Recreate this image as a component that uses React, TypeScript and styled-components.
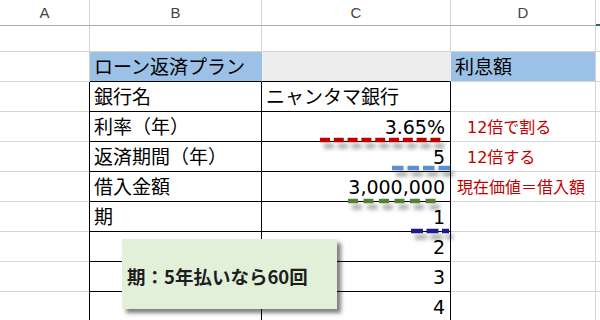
import React from 'react';
import styled, { createGlobalStyle } from 'styled-components';

const GlobalStyle = createGlobalStyle`
  html, body {
    margin: 0;
    padding: 0;
    background: #ffffff;
    overflow: hidden;
  }
`;

const GRID = '#d4d4d4';
const INK = '#000000';
const BLUE_FILL = '#9bc2e6';
const GRAY_FILL = '#ededed';
const NOTE_RED = '#c00000';

const Sheet = styled.div`
  position: relative;
  width: 600px;
  height: 320px;
  overflow: hidden;
  display: grid;
  grid-template-columns: 90px 172px 189px 145px 1fr;
  grid-template-rows: 26px 26px repeat(9, 30px);
  font-family: "DejaVu Sans", "Noto Sans CJK JP", sans-serif;
`;

const HeaderCell = styled.div<{ $selected?: boolean }>`
  box-sizing: border-box;
  display: flex;
  align-items: center;
  justify-content: center;
  border-right: 1px solid ${GRID};
  border-bottom: ${(p) => (p.$selected ? '2px solid #217346' : '1px solid #ababab')};
  font-family: "Liberation Sans", Arial, sans-serif;
  font-size: 15px;
  color: #444444;
`;

const Cell = styled.div<{
  $bg?: string;
  $right?: string;
  $bottom?: string;
  $edge?: boolean;
  $align?: 'left' | 'right';
  $color?: string;
  $size?: number;
  $pad?: number;
}>`
  box-sizing: border-box;
  display: flex;
  align-items: center;
  justify-content: ${(p) => (p.$align === 'right' ? 'flex-end' : 'flex-start')};
  padding: 2px ${(p) => (p.$align === 'right' ? 5 : 0)}px 0 ${(p) => p.$pad ?? 4}px;
  background: ${(p) => p.$bg ?? 'transparent'};
  border-right: 1px solid ${(p) => p.$right ?? GRID};
  border-bottom: 1px solid ${(p) => p.$bottom ?? GRID};
  box-shadow: ${(p) => (p.$edge ? `-1px 0 0 ${INK}` : 'none')};
  color: ${(p) => p.$color ?? '#000000'};
  font-size: ${(p) => p.$size ?? 19}px;
  line-height: 1;
  white-space: nowrap;
`;

const Dash = styled.svg<{ $x: number; $y: number }>`
  position: absolute;
  left: ${(p) => p.$x}px;
  top: ${(p) => p.$y}px;
  overflow: visible;
  filter: drop-shadow(4px 6px 2px rgba(0, 0, 0, 0.38));
`;

const Callout = styled.div`
  position: absolute;
  left: 122px;
  top: 239px;
  width: 215px;
  height: 70px;
  box-sizing: border-box;
  padding: 3px 0 0 5px;
  display: flex;
  align-items: center;
  background: #e2f0d9;
  box-shadow: 4px 4px 4px rgba(0, 0, 0, 0.5);
  font-family: "Noto Sans CJK JP", sans-serif;
  font-weight: 700;
  font-size: 18.5px;
  color: #1e1e1e;
`;

type Row = {
  b?: string;
  c?: string;
  d?: string;
  cRight?: boolean;
  note?: boolean;
  notePad?: number;
};

const body: Row[] = [
  { b: '銀行名', c: 'ニャンタマ銀行' },
  { b: '利率（年）', c: '3.65%', cRight: true, d: '12倍で割る', note: true, notePad: 16 },
  { b: '返済期間（年）', c: '5', cRight: true, d: '12倍する', note: true, notePad: 16 },
  { b: '借入金額', c: '3,000,000', cRight: true, d: '現在価値＝借入額', note: true, notePad: 6 },
  { b: '期', c: '1', cRight: true },
  { c: '2', cRight: true },
  { c: '3', cRight: true },
  { c: '4', cRight: true },
];

const dashes = [
  { x: 320, y: 140, w: 124, color: '#c00000', pattern: '10 3.8' },
  { x: 392, y: 168, w: 60, color: '#5b8fd5', pattern: '11.5 4' },
  { x: 348, y: 200.5, w: 92, color: '#548235', pattern: '10 5.5' },
  { x: 411, y: 231.3, w: 38, color: '#1c1c8a', pattern: '12 3.5' },
];

// Spreadsheet: header strip, a blank row, the title row and the loan table
const LoanSheet: React.FC = () => (
  <>
    <GlobalStyle />
    <Sheet>
      <HeaderCell>A</HeaderCell>
      <HeaderCell>B</HeaderCell>
      <HeaderCell>C</HeaderCell>
      <HeaderCell>D</HeaderCell>
      <HeaderCell $selected />

      <Cell />
      <Cell />
      <Cell />
      <Cell />
      <Cell />

      <Cell />
      <Cell $bg={BLUE_FILL} $bottom={INK} $right={BLUE_FILL}>ローン返済プラン</Cell>
      <Cell $bg={GRAY_FILL} $bottom={INK} $right={GRAY_FILL} />
      <Cell $bg={BLUE_FILL}>利息額</Cell>
      <Cell />

      {body.map((row, i) => (
        <React.Fragment key={i}>
          <Cell />
          <Cell $edge $right={INK} $bottom={INK}>{row.b}</Cell>
          <Cell $right={INK} $bottom={INK} $align={row.cRight ? 'right' : 'left'}>
            {row.c}
          </Cell>
          <Cell $color={row.note ? NOTE_RED : undefined} $size={row.note ? 16 : undefined} $pad={row.notePad}>
            {row.d}
          </Cell>
          <Cell />
        </React.Fragment>
      ))}

      {dashes.map((d, i) => (
        <Dash key={i} $x={d.x} $y={d.y - 2} width={d.w} height={4}>
          <line x1={0} y1={2} x2={d.w} y2={2} stroke={d.color} strokeWidth={4.5} strokeDasharray={d.pattern} />
        </Dash>
      ))}

      <Callout>期：5年払いなら60回</Callout>
    </Sheet>
  </>
);

export default LoanSheet;
